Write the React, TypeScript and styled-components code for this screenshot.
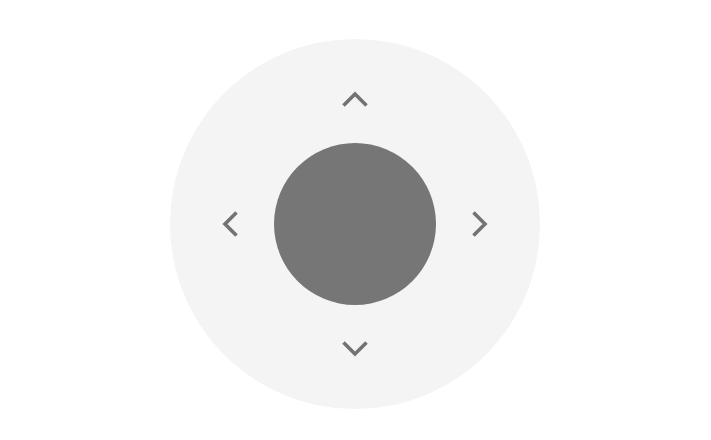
import { styled, createGlobalStyle } from "styled-components"

type Dir = "up" | "down" | "left" | "right"

const GlobalStyle = createGlobalStyle`
  html, body {
    margin: 0;
    padding: 0;
    background: #ffffff;
    font-family: "Roboto", "Liberation Sans", sans-serif;
  }
`

const rotation: Record<Dir, number> = {
  up: 0,
  right: 90,
  down: 180,
  left: 270,
}

const area: Record<Dir, string> = {
  up: "1 / 2",
  left: "2 / 1",
  right: "2 / 3",
  down: "3 / 2",
}

const Chevron = ({ dir }: { dir: Dir }) => (
  <ChevronSvg viewBox="0 0 30 18" width={30} height={18} $rotate={rotation[dir]}>
    <polyline
      points="3.5,15.5 15,4 26.5,15.5"
      fill="none"
      stroke="#737373"
      strokeWidth={3.6}
      strokeLinecap="butt"
      strokeLinejoin="miter"
    />
  </ChevronSvg>
)

const App = () => {
  const dirs: Dir[] = ["up", "left", "right", "down"]

  return (
    <>
      <GlobalStyle />
      <Page>
        <Pad>
          {dirs.map((d) => (
            <DirButton key={d} $area={area[d]} aria-label={d}>
              <Chevron dir={d} />
            </DirButton>
          ))}
          <CenterButton aria-label="ok" />
        </Pad>
      </Page>
    </>
  )
}

const Page = styled.div`
  width: 100%;
  height: 440px;
  box-sizing: border-box;
  padding-top: 8px;
  padding-right: 1px;
  display: flex;
  align-items: center;
  justify-content: center;
`

const Pad = styled.div`
  width: 370px;
  height: 370px;
  box-sizing: border-box;
  padding: 16px;
  border-radius: 50%;
  background: #f4f4f4;
  display: grid;
  grid-template-columns: 1fr 162px 1fr;
  grid-template-rows: 1fr 162px 1fr;
`

const DirButton = styled.button<{ $area: string }>`
  grid-row: ${(p) => p.$area.split(" / ")[0]};
  grid-column: ${(p) => p.$area.split(" / ")[1]};
  display: flex;
  align-items: center;
  justify-content: center;
  background: transparent;
  border: none;
  padding: 0;
  cursor: pointer;
`

const CenterButton = styled.button`
  grid-row: 2;
  grid-column: 2;
  width: 162px;
  height: 162px;
  border-radius: 50%;
  border: none;
  padding: 0;
  background: #767676;
  cursor: pointer;
`

const ChevronSvg = styled.svg<{ $rotate: number }>`
  display: block;
  transform: rotate(${(p) => p.$rotate}deg);
`

export default App
